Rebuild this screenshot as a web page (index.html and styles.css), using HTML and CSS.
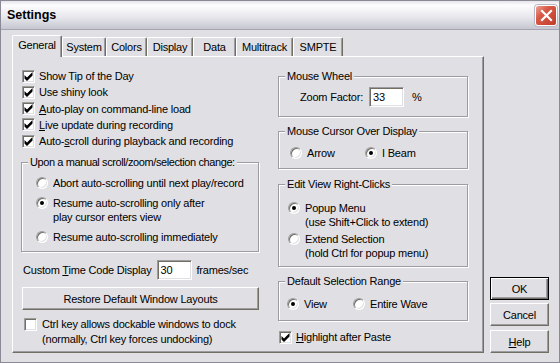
FILE: index.html
```html
<!DOCTYPE html>
<html lang="en">

<head>
    <meta charset="UTF-8">
    <meta name="viewport" content="width=device-width, initial-scale=1.0">
    <title>Settings</title>
    <link rel="stylesheet" href="styles.css">
</head>

<body>
    <div class="window">
        <div class="titlebar">
            <span class="title">Settings</span>
            <span class="close">
                <svg width="19" height="19" viewBox="0 0 19 19">
                    <path d="M5 5 L14 14 M14 5 L5 14" stroke="#fff" stroke-width="2.2" stroke-linecap="square" />
                </svg>
            </span>
        </div>

        <div class="client">
            <div class="tabbox">
                <ul class="tabs">
                    <li class="tab active" style="width: 50px">General</li>
                    <li class="tab" style="width: 44px">System</li>
                    <li class="tab" style="width: 41px">Colors</li>
                    <li class="tab" style="width: 46px">Display</li>
                    <li class="tab" style="width: 43px">Data</li>
                    <li class="tab" style="width: 57px">Multitrack</li>
                    <li class="tab" style="width: 50px">SMPTE</li>
                </ul>

                <div class="panel">
                    <!-- left column -->
                    <div class="col-left">
                        <div class="check"><span class="box on"></span>Show Tip of the Day</div>
                        <div class="check"><span class="box on"></span>Use shiny look</div>
                        <div class="check"><span class="box on"></span><span><u>A</u>uto-play on command-line load</span></div>
                        <div class="check"><span class="box on"></span><span><u>L</u>ive update during recording</span></div>
                        <div class="check"><span class="box on"></span><span>Auto-<u>s</u>croll during playback and recording</span></div>

                        <fieldset class="group upon">
                            <legend>Upon a manual scroll/zoom/selection change:</legend>
                            <div class="option"><span class="radio"></span><span>Abort auto-scrolling until next play/record</span></div>
                            <div class="option"><span class="radio on"></span><span>Resume auto-scrolling only after<br>play cursor enters view</span></div>
                            <div class="option"><span class="radio"></span><span>Resume auto-scrolling immediately</span></div>
                        </fieldset>

                        <div class="timecode">
                            <span>Custom <u>T</u>ime Code Display</span>
                            <span class="field">30</span>
                            <span>frames/sec</span>
                        </div>

                        <button class="btn restore">Restore Default Window Layouts</button>

                        <div class="check dock"><span class="box"></span><span>Ctrl key allows dockable windows to dock<br>(normally, Ctrl key forces undocking)</span></div>
                    </div>

                    <!-- right column -->
                    <div class="col-right">
                        <fieldset class="group wheel">
                            <legend>Mouse Wheel</legend>
                            <div class="zoom">
                                <span>Zoom Factor:</span>
                                <span class="field">33</span>
                                <span class="pct">%</span>
                            </div>
                        </fieldset>

                        <fieldset class="group cursor">
                            <legend>Mouse Cursor Over Display</legend>
                            <div class="inline">
                                <div class="option arrow"><span class="radio"></span><span>Arrow</span></div>
                                <div class="option"><span class="radio on"></span><span>I Beam</span></div>
                            </div>
                        </fieldset>

                        <fieldset class="group clicks">
                            <legend>Edit View Right-Clicks</legend>
                            <div class="option"><span class="radio on"></span><span>Popup Menu<br>(use Shift+Click to extend)</span></div>
                            <div class="option"><span class="radio"></span><span>Extend Selection<br>(hold Ctrl for popup menu)</span></div>
                        </fieldset>

                        <fieldset class="group range">
                            <legend>Default Selection Range</legend>
                            <div class="inline">
                                <div class="option view"><span class="radio on"></span><span>View</span></div>
                                <div class="option"><span class="radio"></span><span>Entire Wave</span></div>
                            </div>
                        </fieldset>

                        <div class="check paste"><span class="box on"></span><span><u>H</u>ighlight after Paste</span></div>
                    </div>
                </div>
            </div>

            <div class="side">
                <button class="btn default">OK</button>
                <button class="btn">Cancel</button>
                <button class="btn"><u>H</u>elp</button>
            </div>
        </div>
    </div>
</body>

</html>
```

FILE: styles.css
```css
* {
    margin: 0;
    padding: 0;
    box-sizing: border-box;
}

body {
    font-family: "Liberation Sans", Arial, sans-serif;
    font-size: 11px;
    letter-spacing: -0.2px;
    white-space: nowrap;
    color: #000;
    background: #e0dfe3;
}

.window {
    width: 560px;
    height: 363px;
    border: 1px solid #8a8a96;
    background: #e0dfe3;
    display: flex;
    flex-direction: column;
}

/* title bar */
.titlebar {
    height: 29px;
    flex: none;
    display: flex;
    align-items: center;
    justify-content: space-between;
    padding: 0 2px 0 6px;
    border-bottom: 1px solid #a5a5b1;
    background: linear-gradient(#e4e4ea 0%, #fdfdfe 15%, #e9e9ee 55%, #c6c6d0 100%);
}

.title {
    font-weight: bold;
    font-size: 12.5px;
    letter-spacing: 0;
}

.close {
    width: 22px;
    height: 21px;
    border: 1px solid #fff;
    border-radius: 3px;
    background: linear-gradient(135deg, #eca597 0%, #d85a48 35%, #c23a28 100%);
    display: flex;
    align-items: center;
    justify-content: center;
    box-shadow: 0 0 0 1px #b8b8c4;
}

/* client area */
.client {
    flex: 1;
    display: flex;
    padding: 5px 0 9px 11px;
}

.tabbox {
    width: 472px;
    display: flex;
    flex-direction: column;
}

.tabs {
    height: 21px;
    display: flex;
    align-items: flex-end;
    list-style: none;
}

.tab {
    height: 19px;
    line-height: 18px;
    text-align: center;
    border-top: 1px solid #fff;
    border-left: 1px solid #fff;
    border-right: 1px solid #716f64;
    border-radius: 2px 2px 0 0;
    box-shadow: inset -1px 0 0 #9d9da1;
    background: #e0dfe3;
}

.tab.active {
    height: 22px;
    line-height: 19px;
    margin-bottom: -1px;
    position: relative;
    z-index: 1;
}

.panel {
    height: 297px;
    display: flex;
    padding-left: 8px;
    border: 1px solid;
    border-color: #fff #716f64 #716f64 #fff;
    box-shadow: inset -1px -1px 0 #9d9da1;
}

.col-left {
    width: 238px;
    padding-top: 11px;
}

.col-right {
    width: 190px;
    margin-left: 19px;
    padding-top: 13px;
}

/* checkboxes and radios */
.check {
    height: 16.25px;
    display: flex;
    align-items: center;
    gap: 4px;
    padding-left: 1px;
}

.box {
    width: 13px;
    height: 13px;
    flex: none;
    position: relative;
    background: #fff;
    border: 1px solid;
    border-color: #9d9da1 #fff #fff #9d9da1;
    box-shadow: inset 1px 1px 0 #716f64, inset -1px -1px 0 #e0dfe3;
}

.box.on::after {
    content: "";
    position: absolute;
    left: 1px;
    top: 1px;
    width: 9px;
    height: 9px;
    background: url("data:image/svg+xml,%3Csvg xmlns='http://www.w3.org/2000/svg' width='9' height='9'%3E%3Cpath d='M0.5 3 L3 5.5 L8.5 0 L8.5 3.5 L3 9 L0.5 6.5 Z' fill='%23000'/%3E%3C/svg%3E") no-repeat;
}

.radio {
    width: 12px;
    height: 12px;
    flex: none;
    margin-top: 1px;
    position: relative;
    border-radius: 50%;
    background: #fff;
    border: 1px solid;
    border-color: #9d9da1 #fff #fff #9d9da1;
    box-shadow: inset 1px 1px 0 #716f64, inset -1px -1px 0 #e0dfe3;
}

.radio.on::after {
    content: "";
    position: absolute;
    left: 3px;
    top: 3px;
    width: 4px;
    height: 4px;
    border-radius: 50%;
    background: #000;
}

.option {
    display: flex;
    align-items: flex-start;
    gap: 5px;
    line-height: 14px;
}

/* group boxes */
.group {
    border: 1px solid #9d9da1;
    box-shadow: inset 1px 1px 0 #fff, 1px 1px 0 #fff;
    padding: 0 6px;
    min-width: 0;
}

.group legend {
    padding: 0 2px;
    line-height: 13px;
    background: #e0dfe3;
}

.upon {
    margin-top: 7px;
    padding-top: 7px;
    padding-bottom: 7px;
}

.upon legend {
    letter-spacing: -0.4px;
}

.upon .option {
    padding-left: 8px;
    margin-bottom: 6px;
}

.upon .option:last-child {
    margin-bottom: 0;
}

.timecode {
    margin-top: 8px;
    height: 20px;
    display: flex;
    align-items: center;
    padding-left: 2px;
}

.timecode .field {
    margin: 0 5px 0 5px;
}

.field {
    width: 35px;
    height: 20px;
    padding: 2px 3px;
    line-height: 14px;
    background: #fff;
    border: 1px solid;
    border-color: #9d9da1 #fff #fff #9d9da1;
    box-shadow: inset 1px 1px 0 #716f64, inset -1px -1px 0 #e0dfe3;
}

/* push buttons */
.btn {
    font: inherit;
    letter-spacing: inherit;
    color: #000;
    height: 23px;
    background: #e0dfe3;
    border: 1px solid;
    border-color: #fff #716f64 #716f64 #fff;
    box-shadow: inset -1px -1px 0 #9d9da1;
}

.btn.default {
    border-color: #000;
    box-shadow: inset 1px 1px 0 #fff, inset -1px -1px 0 #716f64, inset -2px -2px 0 #9d9da1;
}

.restore {
    display: block;
    width: 237px;
    margin: 7px 0 0 1px;
}

.dock {
    height: auto;
    margin-top: 7px;
    align-items: flex-start;
    line-height: 15px;
    padding-left: 3px;
    gap: 5px;
}

.dock .box {
    margin-top: 1px;
}

/* right column groups */
.wheel {
    padding-top: 4px;
    padding-bottom: 9px;
}

.zoom {
    display: flex;
    align-items: center;
    padding-left: 15px;
}

.zoom .field {
    margin-left: 6px;
}

.pct {
    margin-left: 8px;
}

.cursor {
    margin-top: 8px;
    padding-top: 8px;
    padding-bottom: 8px;
}

.inline {
    display: flex;
}

.cursor .inline {
    padding-left: 5px;
}

.arrow {
    width: 75px;
}

.clicks {
    margin-top: 9px;
    padding-top: 10px;
    padding-bottom: 6px;
}

.clicks .option {
    padding-left: 3px;
}

.clicks .option + .option {
    margin-top: 3px;
}

.range {
    margin-top: 8px;
    padding-top: 9px;
    padding-bottom: 9px;
}

.range .inline {
    padding-left: 2px;
}

.view {
    width: 66px;
}

.paste {
    margin-top: 9px;
    height: 14px;
}

/* OK / Cancel / Help */
.side {
    width: 59px;
    margin-left: 6px;
    display: flex;
    flex-direction: column;
    justify-content: flex-end;
    gap: 3px;
}

.side .btn:last-child {
    margin-top: 1px;
}
```
